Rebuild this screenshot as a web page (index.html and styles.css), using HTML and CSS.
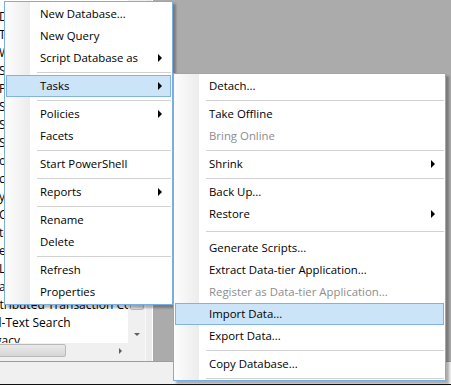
FILE: index.html
```html
<!DOCTYPE html>
<html lang="en">
<head>
    <meta charset="UTF-8">
    <meta name="viewport" content="width=device-width, initial-scale=1.0">
    <title>Object Explorer - Tasks</title>
    <link rel="stylesheet" href="styles.css">
</head>
<body>

<div class="window">
    <div class="main">
        <div class="explorer">
            <div class="tree">
                <div class="node">Database Diagrams</div>
                <div class="node">Tables</div>
                <div class="node">WorkOrders</div>
                <div class="node">Synonyms</div>
                <div class="node">Programmability</div>
                <div class="node">Service Broker</div>
                <div class="node">Storage</div>
                <div class="node">Security</div>
                <div class="node">owner_role</div>
                <div class="node">cdc</div>
                <div class="node">yearly_archive</div>
                <div class="node">Certificates</div>
                <div class="node">tempdb</div>
                <div class="node">event_log</div>
                <div class="node">Logins</div>
                <div class="node">audit_log</div>
                <div class="node deep">Distributed Transaction Coordinator</div>
                <div class="node deep">Full-Text Search</div>
                <div class="node deep">Legacy</div>
            </div>
            <div class="vscroll">
                <div class="sb-btn"></div>
                <div class="sb-track"><div class="thumb"></div></div>
                <div class="sb-btn"><span class="arrow-down"></span></div>
            </div>
            <div class="hscroll">
                <div class="sb-track"><div class="thumb"></div></div>
                <div class="sb-btn"><span class="arrow-right"></span></div>
            </div>
            <div class="corner"></div>
        </div>
        <div class="splitter"></div>
        <div class="mdi"></div>
    </div>
    <div class="statusbar"></div>

    <!-- database context menu -->
    <ul class="menu menu-db">
        <li>New Database...</li>
        <li>New Query</li>
        <li class="sub">Script Database as</li>
        <li class="sep"></li>
        <li class="sub active">Tasks</li>
        <li class="sep"></li>
        <li class="sub">Policies</li>
        <li>Facets</li>
        <li class="sep"></li>
        <li>Start PowerShell</li>
        <li class="sep"></li>
        <li class="sub">Reports</li>
        <li class="sep"></li>
        <li>Rename</li>
        <li>Delete</li>
        <li class="sep"></li>
        <li>Refresh</li>
        <li>Properties</li>
    </ul>

    <!-- Tasks submenu -->
    <ul class="menu menu-tasks">
        <li>Detach...</li>
        <li class="sep"></li>
        <li>Take Offline</li>
        <li class="disabled">Bring Online</li>
        <li class="sep"></li>
        <li class="sub">Shrink</li>
        <li class="sep"></li>
        <li>Back Up...</li>
        <li class="sub">Restore</li>
        <li class="sep wide"></li>
        <li>Generate Scripts...</li>
        <li>Extract Data-tier Application...</li>
        <li class="disabled">Register as Data-tier Application...</li>
        <li class="active">Import Data...</li>
        <li>Export Data...</li>
        <li class="sep"></li>
        <li>Copy Database...</li>
        <li class="sep last"></li>
    </ul>
</div>

</body>
</html>
```

FILE: styles.css
```css
body {
    margin: 0;
    font-family: "Open Sans", "Noto Sans", sans-serif;
    font-size: 11.4px;
    color: #000;
    background: #fff;
}
.window {
    width: 451px;
    height: 386px;
    position: relative;
    overflow: hidden;
    background: #fff;
}

/* background: object explorer + document area */
.main {
    display: flex;
    height: 361px;
}
.explorer {
    width: 145px;
    display: grid;
    grid-template-columns: 128px 17px;
    grid-template-rows: 343px 15px;
    background: #f0f0f0;
    padding-bottom: 3px;
}
.tree {
    background: #fff;
    overflow: hidden;
    padding-top: 8px;
    font-size: 12px;
}
.node {
    height: 18px;
    line-height: 18px;
    white-space: nowrap;
    margin-left: -1px;
}
.node.deep {
    margin-left: -18px;
}
.vscroll {
    display: flex;
    flex-direction: column;
    background: #f0f0f0;
}
.hscroll {
    display: flex;
    background: #f0f0f0;
}
.sb-track {
    flex: 1;
    display: flex;
}
.vscroll .sb-track {
    flex-direction: column;
}
.sb-btn {
    flex: 0 0 17px;
    display: flex;
    justify-content: center;
    align-items: center;
}
.hscroll .sb-btn {
    flex-basis: 16px;
}
.thumb {
    background: linear-gradient(to right, #e9e9e9, #dadada);
    border: 1px solid #b9b9b9;
    border-radius: 2px;
}
.vscroll .thumb {
    height: 290px;
    margin: 1px 1px 0 2px;
}
.hscroll .thumb {
    width: 67px;
    margin: 1px 0 1px -3px;
    background: linear-gradient(#e9e9e9, #d6d6d6);
}
.arrow-down {
    border-top: 3px solid #5f5f5f;
    border-left: 3px solid transparent;
    border-right: 3px solid transparent;
}
.arrow-right {
    border-left: 3px solid #5f5f5f;
    border-top: 3px solid transparent;
    border-bottom: 3px solid transparent;
}
.corner {
    background: #f0f0f0;
}
.splitter {
    width: 6px;
    background: #ececec;
    border-left: 1px solid #fafafa;
    border-right: 1px solid #fff;
}
.mdi {
    flex: 1;
    background: #ababab;
}
.statusbar {
    height: 22px;
    background: #f0f0f0;
    border-top: 1px solid #9c9c9c;
    border-bottom: 1px solid #111;
}

/* context menus */
.menu {
    position: absolute;
    margin: 0;
    padding: 1px;
    list-style: none;
    border: 1px solid #7aaee1;
    background: #fff linear-gradient(to right, #fdfdfd, #ececec) 0 0 / 25px 100% no-repeat;
    box-shadow: 3px 3px 2px rgba(0, 0, 0, 0.28);
}
.menu-db {
    left: 4px;
    top: 1px;
    width: 165px;
}
.menu-tasks {
    left: 173px;
    top: 73px;
    width: 269px;
}
.menu li {
    position: relative;
    height: 22px;
    line-height: 22px;
    padding-left: 34px;
    white-space: nowrap;
}
.menu li.active {
    background: #cce4f8;
    box-shadow: inset 0 0 0 1px #7fb3e6;
}
.menu li.disabled {
    color: #8d8d8d;
}
.menu li.sub::after {
    content: "";
    position: absolute;
    right: 9px;
    top: 7px;
    border-left: 4px solid #000;
    border-top: 4px solid transparent;
    border-bottom: 4px solid transparent;
}
.menu li.sep {
    height: 1px;
    padding: 0;
    margin: 3px 0 2px 31px;
    background: #d2d2d2;
}
.menu li.sep.wide {
    margin: 6px 0 5px 31px;
}
.menu li.sep.last {
    margin-bottom: 0;
}
```
